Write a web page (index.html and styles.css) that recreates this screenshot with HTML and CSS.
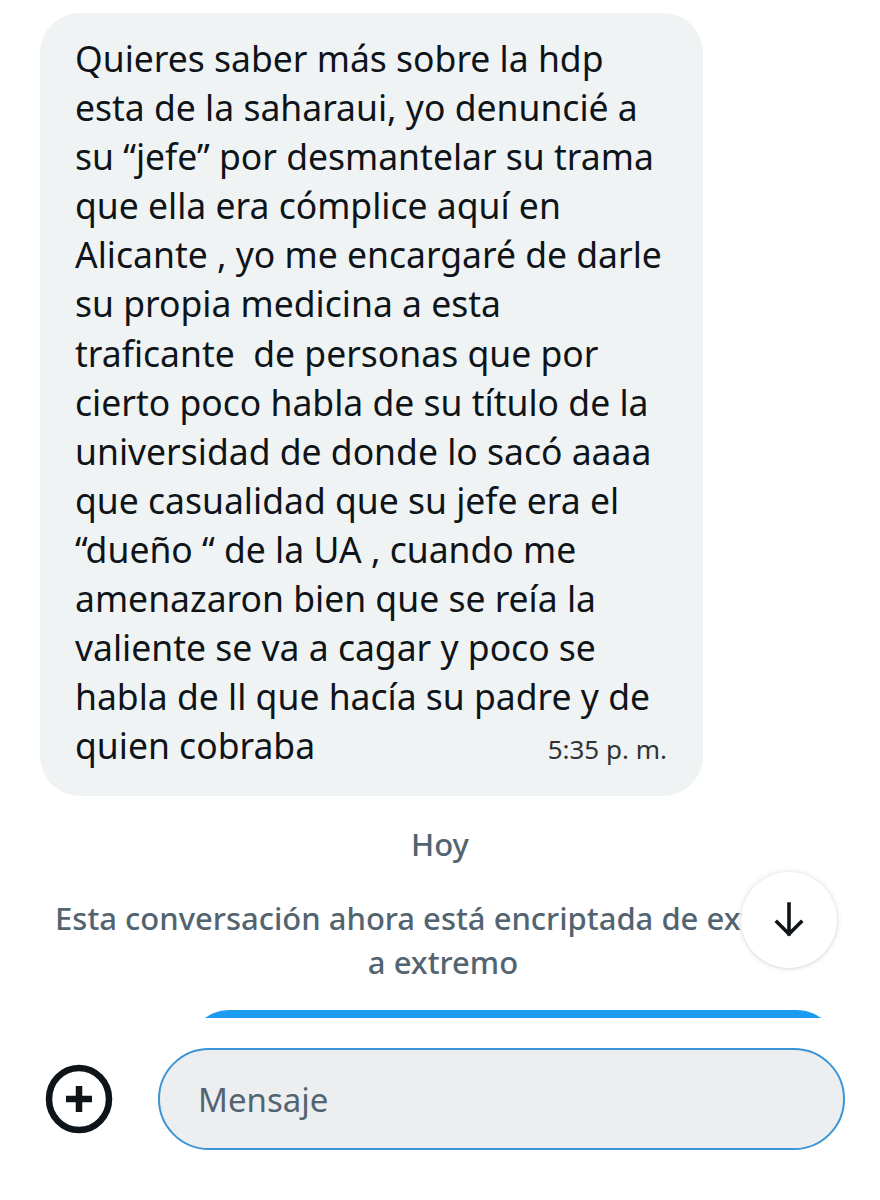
FILE: index.html
```html
<!DOCTYPE html>
<html lang="es">
<head>
<meta charset="utf-8">
<link rel="stylesheet" href="styles.css">
</head>
<body>
<div class="screen">
  <div class="messages">
    <div class="bubble">
      <span class="line">Quieres saber más sobre la hdp</span>
      <span class="line">esta de la saharaui, yo denuncié a</span>
      <span class="line">su “jefe” por desmantelar su trama</span>
      <span class="line">que ella era cómplice aquí en</span>
      <span class="line">Alicante , yo me encargaré de darle</span>
      <span class="line">su propia medicina a esta</span>
      <span class="line">traficante&nbsp; de personas que por</span>
      <span class="line">cierto poco habla de su título de la</span>
      <span class="line">universidad de donde lo sacó aaaa</span>
      <span class="line">que casualidad que su jefe era el</span>
      <span class="line">“dueño “ de la UA , cuando me</span>
      <span class="line">amenazaron bien que se reía la</span>
      <span class="line">valiente se va a cagar y poco se</span>
      <span class="line">habla de ll que hacía su padre y de</span>
      <span class="line last">quien cobraba<span class="time">5:35 p. m.</span></span>
    </div>
    <div class="day">Hoy</div>
    <div class="note">Esta conversación ahora está encriptada de extremo<br>a extremo</div>
    <div class="sent"></div>
    <button class="scroll-down" aria-label="Bajar">
      <svg width="40" height="40" viewBox="0 0 40 40"><path d="M20 4 V34 M8 22 L20 34 L32 22" fill="none" stroke="#0f1419" stroke-width="3.6" stroke-linecap="square" stroke-linejoin="miter"/></svg>
    </button>
  </div>
  <div class="composer">
    <div class="plus">
      <svg width="70" height="70" viewBox="0 0 70 70"><ellipse cx="34" cy="35" rx="30" ry="31" fill="none" stroke="#0f1419" stroke-width="6.5"/><path d="M34 22 V48 M21 35 H47" stroke="#0f1419" stroke-width="6.5"/></svg>
    </div>
    <div class="input">Mensaje</div>
  </div>
</div>
</body>
</html>
```

FILE: styles.css
```css
* { box-sizing: border-box; }
html, body { margin: 0; padding: 0; background: #ffffff; }
body { font-family: "Noto Sans", "Open Sans", "Liberation Sans", sans-serif; color: #0f1419; }
.screen { width: 880px; height: 1200px; overflow: hidden; }
.messages { position: relative; height: 1018px; overflow: hidden; padding-top: 13px; }
.bubble {
  margin-left: 40px;
  width: 663px;
  background: #eff3f4;
  border-radius: 40px;
  padding: 21px 36px 22px 35px;
  font-size: 35.5px;
  line-height: 49.1px;
  color: #0f1419;
}
.line { display: block; white-space: nowrap; }
.line.last { display: flex; justify-content: space-between; align-items: baseline; }
.time { font-size: 26px; color: #2f3336; }
.day {
  margin-top: 24px;
  text-align: center;
  font-size: 31px;
  font-weight: 500;
  color: #536471;
  line-height: 48px;
}
.note {
  margin: 28px 0 0 43px;
  width: 800px;
  white-space: nowrap;
  text-align: center;
  font-size: 31px;
  font-weight: 500;
  color: #536471;
  line-height: 44px;
}
.sent {
  margin-top: 26px;
  margin-left: 189px;
  width: 648px;
  height: 120px;
  background: #1d9bf0;
  border-radius: 40px;
}
.scroll-down {
  position: absolute;
  left: 741px;
  top: 872px;
  width: 96px;
  height: 96px;
  border-radius: 50%;
  border: none;
  background: #ffffff;
  box-shadow: 0 0 6px rgba(0,0,0,0.12), 0 1px 3px rgba(0,0,0,0.08);
  display: flex;
  align-items: center;
  justify-content: center;
  padding: 0;
}
.composer {
  display: flex;
  align-items: center;
  padding: 30px 35px 0 45px;
  gap: 43px;
}
.plus { width: 70px; height: 70px; display: flex; }
.input {
  flex: 1;
  height: 102px;
  border: 2px solid #3a95d6;
  border-radius: 51px;
  background: #eceef0;
  display: flex;
  align-items: center;
  padding-left: 38px;
  font-size: 33px;
  color: #536471;
}
```
